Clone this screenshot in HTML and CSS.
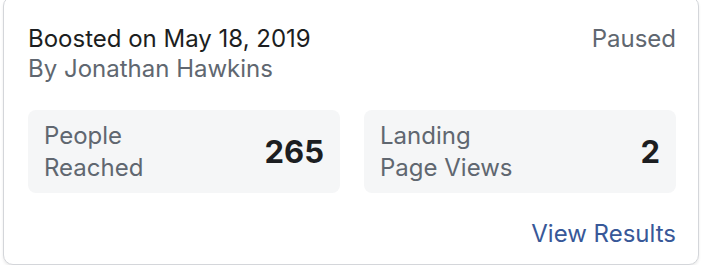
FILE: index.html
```html
<!DOCTYPE html>
<html>
<head>
<meta charset="utf-8">
<link rel="stylesheet" href="styles.css">
</head>
<body>
<div class="card">
  <div class="header">
    <div class="meta">
      <div class="title">Boosted on May 18, 2019</div>
      <div class="author">By Jonathan Hawkins</div>
    </div>
    <div class="status">Paused</div>
  </div>
  <div class="stats">
    <div class="stat">
      <div class="label">People<br>Reached</div>
      <div class="value">265</div>
    </div>
    <div class="stat">
      <div class="label">Landing<br>Page Views</div>
      <div class="value">2</div>
    </div>
  </div>
  <div class="footer">
    <a class="link" href="#">View Results</a>
  </div>
</div>
</body>
</html>
```
FILE: styles.css
```css
html, body {
  margin: 0;
  padding: 0;
  background: #ffffff;
}
body {
  font-family: Inter, "Liberation Sans", sans-serif;
  font-size: 24px;
  line-height: 30px;
  color: #1c1e21;
  padding-left: 3px;
}
.card {
  box-sizing: border-box;
  width: 696px;
  margin-top: -4px;
  border: 1px solid #d4d6da;
  border-radius: 10px;
  box-shadow: 0 2px 3px rgba(0, 0, 0, 0.08);
  padding: 27px 22px 15px 24px;
  background: #fff;
}
.header {
  display: flex;
  justify-content: space-between;
  align-items: flex-start;
}
.title {
  color: #1c1e21;
}
.author {
  color: #606770;
}
.status {
  color: #606770;
}
.stats {
  display: flex;
  gap: 24px;
  margin-top: 26px;
}
.stat {
  flex: 1;
  display: flex;
  justify-content: space-between;
  align-items: center;
  background: #f5f6f7;
  border-radius: 8px;
  padding: 10px 16px 9px 16px;
}
.label {
  color: #606770;
  line-height: 32px;
}
.value {
  font-weight: 700;
  font-size: 31px;
  line-height: 36px;
  color: #1c1e21;
}
.footer {
  display: flex;
  justify-content: flex-end;
  margin-top: 26px;
}
.link {
  color: #385898;
  text-decoration: none;
}
```
